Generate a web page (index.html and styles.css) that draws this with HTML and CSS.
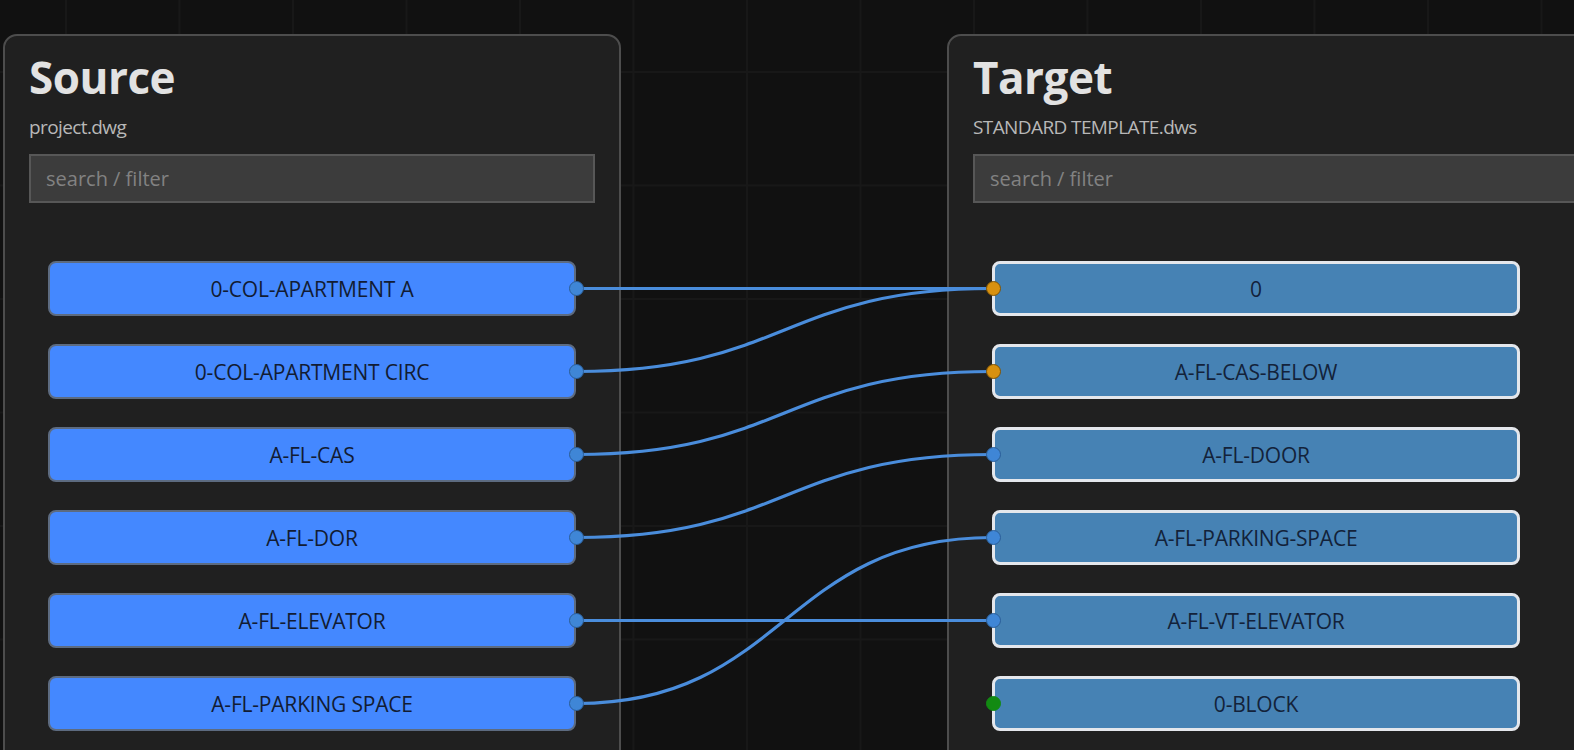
FILE: index.html
```html
<!DOCTYPE html>
<html lang="en">
<head>
    <meta charset="UTF-8">
    <meta name="viewport" content="width=device-width, initial-scale=1.0">
    <title>Layer Mapper</title>
    <link rel="stylesheet" href="styles.css">
</head>
<body>
    <div class="canvas">
        <!-- links between source and target layers -->
        <svg class="edges" width="1574" height="750" viewBox="0 0 1574 750">
            <path d="M577 288.5 C784.5 288.5 784.5 288.5 992 288.5"/>
            <path d="M577 371.5 C784.5 371.5 784.5 288.5 992 288.5"/>
            <path d="M577 454.5 C784.5 454.5 784.5 371.5 992 371.5"/>
            <path d="M577 537.5 C784.5 537.5 784.5 454.5 992 454.5"/>
            <path d="M577 620.5 C784.5 620.5 784.5 620.5 992 620.5"/>
            <path d="M577 703.5 C784.5 703.5 784.5 537.5 992 537.5"/>
        </svg>

        <section class="panel panel-source">
            <h2>Source</h2>
            <div class="file">project.dwg</div>
            <input type="text" class="search" placeholder="search / filter">
            <div class="node-list">
                <div class="node node-source">0-COL-APARTMENT A<span class="handle handle-out"></span></div>
                <div class="node node-source">0-COL-APARTMENT CIRC<span class="handle handle-out"></span></div>
                <div class="node node-source">A-FL-CAS<span class="handle handle-out"></span></div>
                <div class="node node-source">A-FL-DOR<span class="handle handle-out"></span></div>
                <div class="node node-source">A-FL-ELEVATOR<span class="handle handle-out"></span></div>
                <div class="node node-source">A-FL-PARKING SPACE<span class="handle handle-out"></span></div>
            </div>
        </section>

        <section class="panel panel-target">
            <h2>Target</h2>
            <div class="file">STANDARD TEMPLATE.dws</div>
            <input type="text" class="search" placeholder="search / filter">
            <div class="node-list">
                <div class="node node-target"><span class="handle handle-in multi"></span>0</div>
                <div class="node node-target"><span class="handle handle-in multi"></span>A-FL-CAS-BELOW</div>
                <div class="node node-target"><span class="handle handle-in"></span>A-FL-DOOR</div>
                <div class="node node-target"><span class="handle handle-in"></span>A-FL-PARKING-SPACE</div>
                <div class="node node-target"><span class="handle handle-in"></span>A-FL-VT-ELEVATOR</div>
                <div class="node node-target"><span class="handle handle-in new"></span>0-BLOCK</div>
            </div>
        </section>
    </div>
</body>
</html>
```

FILE: styles.css
```css
html, body {
    margin: 0;
    padding: 0;
    overflow: hidden;
}

body {
    font-family: "Open Sans", "Noto Sans", sans-serif;
    background-color: #111;
}

.canvas {
    position: relative;
    width: 1574px;
    height: 750px;
    overflow: hidden;
    background-color: #111;
    background-image:
        linear-gradient(to right, #181818 2px, transparent 2px),
        linear-gradient(to bottom, #181818 2px, transparent 2px);
    background-size: 113.5px 113.5px;
    background-position: 65px 71px;
}

.edges {
    position: absolute;
    left: 0;
    top: 0;
    z-index: 1;
    pointer-events: none;
}

.edges path {
    fill: none;
    stroke: #4a8ddc;
    stroke-width: 3.2;
}

/* floating panels on the canvas */
.panel {
    position: absolute;
    top: 34px;
    width: 618px;
    height: 760px;
    box-sizing: border-box;
    padding: 19px 24px 0;
    background-color: rgba(34, 34, 34, 0.92);
    border: 2px solid #4d4d4d;
    border-radius: 14px;
}

.panel-source {
    left: 3px;
}

.panel-target {
    left: 947px;
    width: 720px;
}

.panel h2 {
    margin: 0;
    font-size: 44px;
    line-height: 44px;
    font-weight: 700;
    letter-spacing: -0.5px;
    color: #e2e2e2;
}

.file {
    margin-top: 18px;
    font-size: 19px;
    line-height: 20px;
    letter-spacing: -0.6px;
    color: #b8b8b8;
}

.search {
    display: block;
    width: 566px;
    height: 49px;
    margin-top: 17px;
    padding: 0 15px;
    box-sizing: border-box;
    font-family: inherit;
    font-size: 20px;
    color: #ddd;
    background-color: #3c3c3c;
    border: 2px solid #575757;
    border-radius: 0;
    outline: none;
}

.search::placeholder {
    color: #828282;
}

.panel-target .search {
    width: 640px;
}

.node-list {
    display: flex;
    flex-direction: column;
    gap: 28px;
    margin-top: 58px;
    padding: 0 19px;
}

.node {
    position: relative;
    z-index: 2;
    display: flex;
    justify-content: center;
    align-items: center;
    width: 528px;
    height: 55px;
    box-sizing: border-box;
    border-radius: 8px;
    font-size: 21px;
    letter-spacing: -0.2px;
}

.node-source {
    background-color: #4488ff;
    border: 2px solid #5d6b80;
    color: #121c33;
}

.node-target {
    background-color: #4682b4;
    border: 3px solid #e4e7ec;
    color: #13223a;
}

.handle {
    position: absolute;
    top: 50%;
    width: 15px;
    height: 15px;
    box-sizing: border-box;
    margin-top: -7.5px;
    border-radius: 50%;
    background-color: #3f86d6;
    border: 1px solid #2b5e98;
}

.handle-out {
    right: -9.5px;
}

.handle-in {
    left: -9.5px;
}

.handle.multi {
    background-color: #d8910f;
    border-color: #7d5408;
}

.handle.new {
    background-color: #128a12;
    border-color: #128a12;
}
```
